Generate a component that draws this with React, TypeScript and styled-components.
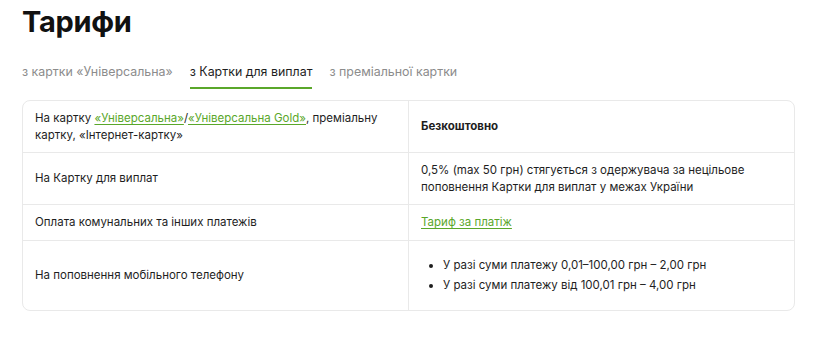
import React from 'react';
import styled, { createGlobalStyle } from 'styled-components';

const GlobalStyle = createGlobalStyle`
  body {
    margin: 0;
    background: #fff;
    font-family: Inter, "Noto Sans", sans-serif;
    color: #1e1e1e;
  }
`;

const Page = styled.div`
  padding: 4px 40px 0 22px;
`;

const Title = styled.h1`
  margin: 0;
  font-size: 29px;
  line-height: 36px;
  font-weight: 700;
  letter-spacing: -0.3px;
  color: #111;
`;

const Tabs = styled.div`
  display: flex;
  gap: 17px;
  margin-top: 24px;
`;

const Tab = styled.div<{ $active?: boolean }>`
  font-size: 12.4px;
  line-height: 16px;
  padding-bottom: 7px;
  color: ${p => (p.$active ? '#1e1e1e' : '#8c8c8c')};
  border-bottom: 2px solid ${p => (p.$active ? '#5aa72a' : 'transparent')};
  white-space: nowrap;
`;

const Table = styled.div`
  margin-top: 11px;
  width: 771px;
  border: 1px solid #e9e9e9;
  border-radius: 8px;
  overflow: hidden;
`;

const Row = styled.div`
  display: grid;
  grid-template-columns: 385px 1fr;
  & + & {
    border-top: 1px solid #e9e9e9;
  }
`;

const Cell = styled.div<{ $bold?: boolean }>`
  display: flex;
  flex-direction: column;
  justify-content: center;
  padding: 9px 12px;
  font-size: 11.5px;
  line-height: 16.5px;
  font-weight: ${p => (p.$bold ? 700 : 400)};
  & + & {
    border-left: 1px solid #e9e9e9;
  }
`;

const Link = styled.a`
  color: #5aa72a;
  text-decoration: underline;
  text-underline-offset: 2px;
`;

const List = styled.ul`
  margin: 7px 0;
  padding-left: 22px;
  li + li {
    margin-top: 4px;
  }
`;

export default function App() {
  return (
    <Page>
      <GlobalStyle />
      <Title>Тарифи</Title>
      <Tabs>
        <Tab>з картки «Універсальна»</Tab>
        <Tab $active>з Картки для виплат</Tab>
        <Tab>з преміальної картки</Tab>
      </Tabs>
      <Table>
        <Row>
          <Cell>
            <div>
              На картку <Link>«Універсальна»</Link>/<Link>«Універсальна Gold»</Link>, преміальну
              <br />
              картку, «Інтернет-картку»
            </div>
          </Cell>
          <Cell $bold>Безкоштовно</Cell>
        </Row>
        <Row>
          <Cell>На Картку для виплат</Cell>
          <Cell>
            0,5% (max 50 грн) стягується з одержувача за нецільове поповнення Картки для виплат у
            межах України
          </Cell>
        </Row>
        <Row>
          <Cell>Оплата комунальних та інших платежів</Cell>
          <Cell>
            <div>
              <Link>Тариф за платіж</Link>
            </div>
          </Cell>
        </Row>
        <Row>
          <Cell>На поповнення мобільного телефону</Cell>
          <Cell>
            <List>
              <li>У разі суми платежу 0,01–100,00 грн – 2,00 грн</li>
              <li>У разі суми платежу від 100,01 грн – 4,00 грн</li>
            </List>
          </Cell>
        </Row>
      </Table>
    </Page>
  );
}
